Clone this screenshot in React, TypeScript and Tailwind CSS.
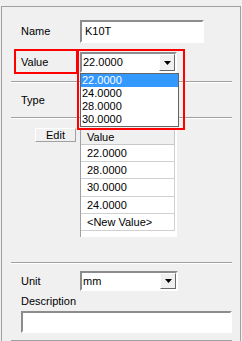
// Property panel with an open "Value" combo box, highlighted with red callout boxes

const font = "font-['Liberation_Sans',Arial,sans-serif]";

function Sunken({ className, children }: { className?: string; children?: React.ReactNode }) {
    return (
        <div className={`border-t-2 border-l-2 border-t-[#8c8c8c] border-l-[#8c8c8c] border-b-2 border-r-2 border-b-white border-r-white bg-white ${className ?? ''}`}>
            {children}
        </div>
    );
}

function ComboBox({ value, className }: { value: string; className?: string }) {
    return (
        <Sunken className={`flex items-center ${className ?? ''}`}>
            <span className="flex-1 pl-[1px]">{value}</span>
            <div className="w-[16px] h-full flex items-center justify-center bg-[#f0f0f0] border-t border-l border-white border-b border-r border-b-[#696969] border-r-[#696969]">
                <svg width="7" height="4" viewBox="0 0 7 4">
                    <polygon points="0,0 7,0 3.5,4" fill="#000" />
                </svg>
            </div>
        </Sunken>
    );
}

function Separator({ className }: { className?: string }) {
    return <div className={`ml-[9px] w-[221px] h-[2px] border-t border-[#a0a0a0] border-b border-b-white ${className ?? ''}`} />;
}

const gridRows = [
    { v: '22.0000', h: 'h-[17px]' },
    { v: '28.0000', h: 'h-[17px]' },
    { v: '30.0000', h: 'h-[18px]' },
    { v: '24.0000', h: 'h-[17px]' },
    { v: '<New Value>', h: 'h-[17px]' },
];

const listItems = ['22.0000', '24.0000', '28.0000', '30.0000'];

export default function App() {
    return (
        <div className={`w-[242px] h-[341px] bg-[#f0f0f0] pt-[6px] pl-[1px] overflow-hidden text-[11px] leading-none text-black ${font}`}>
            <div className="relative w-[240px] h-[335px] border-l border-t border-r border-[#a0a0a0]">
                {/* Name */}
                <div className="flex items-center mt-[13px] h-[23px]">
                    <span className="w-[78px] pl-[19px]">Name</span>
                    <Sunken className="w-[124px] h-[23px] flex items-center pl-[3px]">K10T</Sunken>
                </div>

                {/* Value */}
                <div className="flex items-center mt-[9px] h-[21px]">
                    <span className="w-[78px] pl-[19px]">Value</span>
                    <ComboBox value="22.0000" className="w-[97px] h-[21px]" />
                </div>

                <Separator className="mt-[8px]" />

                {/* Type */}
                <div className="flex items-center h-[34px]">
                    <span className="pl-[19px]">Type</span>
                </div>

                <Separator />

                {/* Values grid */}
                <div className="flex items-start">
                    <button className="ml-[33px] mt-[9px] w-[41px] h-[14px] flex items-center justify-center bg-[#f0f0f0] border-t border-l border-white border-b border-r border-b-[#a0a0a0] border-r-[#a0a0a0]">
                        Edit
                    </button>
                    <div className="ml-[4px] mt-[11px] w-[97px] h-[107px] bg-white border-l border-[#a0a0a0] flex flex-col">
                        <div className="h-[15px] mr-[2px] flex items-center pl-[6px] bg-[#f0f0f0] border-b border-r border-[#c8c8c8]">Value</div>
                        {gridRows.map((r) => (
                            <div key={r.v} className={`${r.h} mr-[2px] flex items-center pl-[6px] border-b border-r border-[#d0d0d0]`}>
                                {r.v}
                            </div>
                        ))}
                    </div>
                </div>

                <Separator className="mt-[25px]" />

                {/* Unit */}
                <div className="flex items-center mt-[7px] h-[20px]">
                    <span className="w-[78px] pl-[19px]">Unit</span>
                    <ComboBox value="mm" className="w-[98px] h-[20px]" />
                </div>

                {/* Description */}
                <div className="pl-[19px] mt-[5px] h-[12px]">Description</div>
                <Sunken className="ml-[19px] mt-[3px] w-[211px] h-[22px]" />

                <Separator className="mt-[7px]" />

                {/* Open drop-down list */}
                <div className="absolute left-[78px] top-[66px] w-[99px] h-[54px] bg-white border border-[#646464] flex flex-col">
                    {listItems.map((item, i) => (
                        <div key={item} className={`h-[13px] flex items-center pl-[1px] ${i === 0 ? 'bg-[#3399ff] text-white' : ''}`}>
                            {item}
                        </div>
                    ))}
                </div>

                {/* Red callouts */}
                <div className="absolute left-[12px] top-[42px] w-[64px] h-[25px] border-2 border-[#ff0000]" />
                <div className="absolute left-[75px] top-[42px] w-[108px] h-[81px] border-2 border-[#ff0000]" />
            </div>
        </div>
    );
}
